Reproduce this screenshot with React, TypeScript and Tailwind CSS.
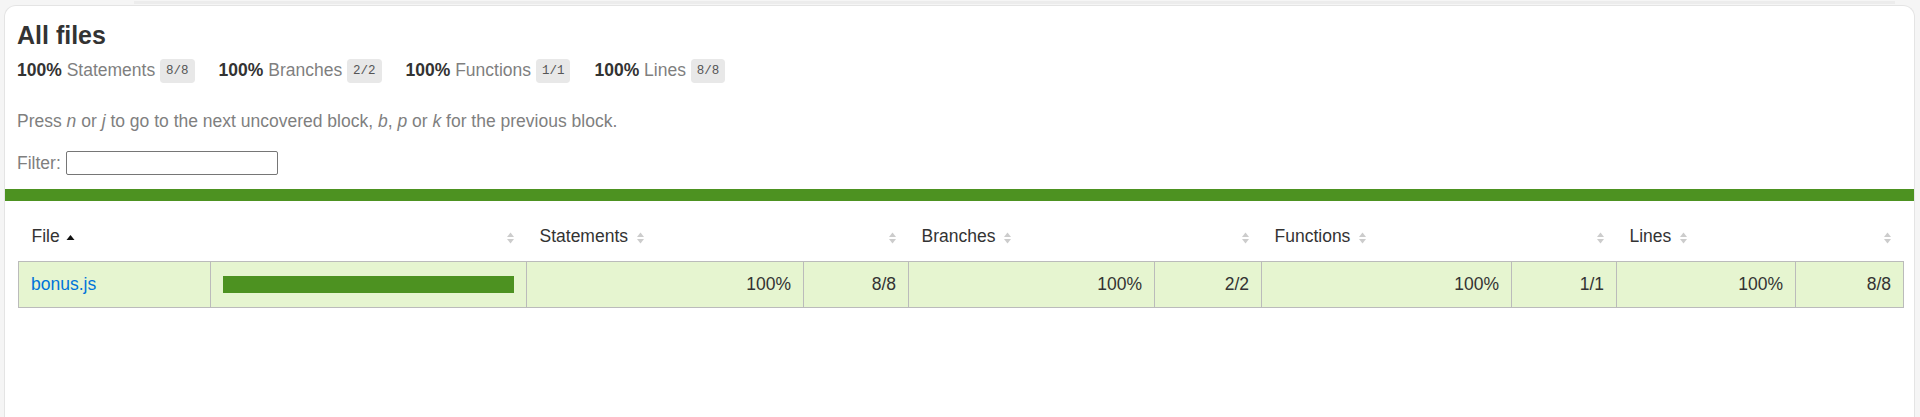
import React from 'react';

// istanbul-style coverage summary, page zoomed to 125%
type Metric = { label: string; pct: string; frac: string };

const metrics: Metric[] = [
  { label: 'Statements', pct: '100%', frac: '8/8' },
  { label: 'Branches', pct: '100%', frac: '2/2' },
  { label: 'Functions', pct: '100%', frac: '1/1' },
  { label: 'Lines', pct: '100%', frac: '8/8' },
];

// file, pic, then pct/abs pairs
const colWidths = [192, 316, 277, 105, 246, 107, 250, 105, 179, 108];

const rowCells = ['100%', '8/8', '100%', '2/2', '100%', '1/1', '100%', '8/8'];
const headers = ['Statements', 'Branches', 'Functions', 'Lines'];

function Sorter({ sorted }: { sorted?: boolean }) {
  if (sorted) {
    return (
      <svg width="9" height="12" viewBox="0 0 9 12" className="inline-block ml-[6px] align-baseline">
        <path d="M0.5 10 L4.5 5 L8.5 10 Z" fill="#111" />
      </svg>
    );
  }
  return (
    <svg width="9" height="14" viewBox="0 0 9 14" className="inline-block ml-[8px] align-middle">
      <path d="M1 6 L4.5 1.5 L8 6 Z" fill="#cccccc" />
      <path d="M1 8 L4.5 12.5 L8 8 Z" fill="#cccccc" />
    </svg>
  );
}

export default function App() {
  return (
    <div className="min-h-screen bg-[#f5f5f5] pl-[4px] pr-[5px] font-['Liberation_Sans',Arial,sans-serif] text-[#333]">
      <div className="h-[5px] pt-[1px]">
        <div className="ml-[130px] mr-[20px] h-[3px] bg-[#ececec]" />
      </div>
      <div className="min-h-[412px] rounded-t-[12px] border border-b-0 border-[#e4e4e4] bg-white">
        {/* --- Header / summary --- */}
        <div className="px-[12px] pt-[12px] pb-[14px]">
          <h1 className="mt-[3px] text-[25px] leading-[29px] font-bold">All files</h1>

          <div className="mt-[8px] flex h-[25px] items-center text-[17.5px]">
            {metrics.map((m) => (
              <div key={m.label} className="mr-[24px] flex items-center whitespace-pre">
                <span className="font-bold">{m.pct} </span>
                <span className="text-[#7f7f7f]">{m.label} </span>
                <span className="rounded-[3.75px] bg-[#e8e8e8] px-[6px] py-[5px] font-['Liberation_Mono',monospace] text-[12.5px] leading-[14px] text-[#555]">
                  {m.frac}
                </span>
              </div>
            ))}
          </div>

          <p className="mt-[28px] text-[17.5px] leading-[21px] text-[#7f7f7f]">
            Press <em>n</em> or <em>j</em> to go to the next uncovered block, <em>b</em>, <em>p</em> or <em>k</em> for the previous block.
          </p>

          <div className="mt-[19px] flex h-[24px] items-center text-[17.5px] text-[#7f7f7f]">
            <span>Filter:</span>
            <input
              type="search"
              className="ml-[5px] h-[24px] w-[212px] rounded-[2px] border border-[#767676] bg-white px-[2px] text-[14px] text-[#333] outline-none"
            />
          </div>
        </div>

        {/* --- Status line --- */}
        <div className="h-[12px] bg-[#4d9221]" />

        {/* --- Table --- */}
        <div className="pt-[12px] pr-[11px] pl-[13px]">
          <table className="w-full table-fixed border-collapse text-[17.5px] leading-[21px]">
            <colgroup>
              {colWidths.map((w, i) => (
                <col key={i} style={{ width: w }} />
              ))}
            </colgroup>
            <thead>
              <tr className="h-[48px]">
                <th className="px-[13px] text-left font-normal whitespace-nowrap">
                  File<Sorter sorted />
                </th>
                <th className="px-[12px] text-right font-normal"><Sorter /></th>
                {headers.map((h) => (
                  <React.Fragment key={h}>
                    <th className="px-[13px] text-left font-normal whitespace-nowrap">{h}<Sorter /></th>
                    <th className="px-[12px] text-right font-normal"><Sorter /></th>
                  </React.Fragment>
                ))}
              </tr>
            </thead>
            <tbody>
              <tr className="h-[46px] bg-[#e6f5d0]">
                <td className="border border-[#bbb] px-[12px]">
                  <a href="#" className="text-[#0074d9]">bonus.js</a>
                </td>
                <td className="border border-[#bbb] px-[12px]">
                  <div className="h-[17px] w-full bg-[#4d9221]" />
                </td>
                {rowCells.map((c, i) => (
                  <td key={i} className="border border-[#bbb] px-[12px] text-right">{c}</td>
                ))}
              </tr>
            </tbody>
          </table>
        </div>
      </div>
    </div>
  );
}
